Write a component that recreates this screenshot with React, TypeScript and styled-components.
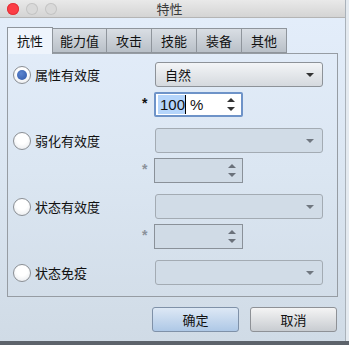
import React from "react";
import styled, { createGlobalStyle } from "styled-components";

const Global = createGlobalStyle`
  html, body { margin: 0; padding: 0; }
  body {
    width: 349px; height: 345px; overflow: hidden;
    background: #e6ebf0;
    font-family: "Noto Sans CJK SC", "Noto Sans", sans-serif;
    font-size: 13px; color: #1a1a1a;
  }
`;

const Desktop = styled.div`
  width: 349px; height: 345px;
  display: flex; flex-direction: column;
  background: linear-gradient(to right, transparent 345px, #aab2ba 345px, #aab2ba 346px, #e4eaf0 346px);
`;

const Window = styled.div`
  width: 345px; height: 341px;
  display: flex; flex-direction: column;
  background: linear-gradient(to bottom, #e4eefb 0%, #dbe6f2 50%, #d0dbe6 100%);
`;

const BottomStrip = styled.div`
  height: 4px;
  background: #5d636b;
`;

const TitleBar = styled.div`
  height: 17px;
  flex: none;
  display: flex; align-items: center;
  position: relative;
  background: linear-gradient(to bottom, #e9e9e9, #d4d4d4);
  border-bottom: 1px solid #b4b4b4;
`;

const Lights = styled.div`
  display: flex; gap: 7px; padding-left: 7px; align-items: center;
`;

const Light = styled.span<{ $color: string; $border: string }>`
  width: 12px; height: 12px; border-radius: 50%;
  background: ${p => p.$color};
  box-shadow: inset 0 0 0 1px ${p => p.$border};
  box-sizing: border-box;
`;

const Title = styled.div`
  position: absolute; left: 0; right: 0; top: 0; bottom: 0;
  display: flex; align-items: center; justify-content: center;
  font-size: 13px; color: #3a3a3a; padding-right: 6px;
`;

const Body = styled.div`
  flex: 1;
  display: flex; flex-direction: column;
  padding: 9px 7px 0 7px;
`;

const TabBar = styled.div`
  display: flex; align-items: flex-end;
  height: 26px;
  position: relative; z-index: 1;
`;

const Tab = styled.div<{ $active?: boolean; $w: number }>`
  width: ${p => p.$w}px;
  box-sizing: border-box;
  height: ${p => (p.$active ? 27 : 25)}px;
  margin-bottom: ${p => (p.$active ? -1 : 0)}px;
  display: flex; align-items: center; justify-content: center;
  border: 1px solid #8f959c;
  border-bottom: ${p => (p.$active ? "none" : "1px solid #8f959c")};
  margin-right: -1px;
  background: ${p => (p.$active ? "#eef4fc" : "linear-gradient(to bottom, #d9dee4, #b9c0c8)")};
  color: #111;
  font-size: 13px;
  padding-bottom: ${p => (p.$active ? 2 : 0)}px;
`;

const Panel = styled.div`
  width: 331px; height: 244px;
  box-sizing: border-box;
  border: 1px solid #969ca3;
  display: flex; flex-direction: column;
  gap: 11px;
  padding: 8px 0 0 5px;
`;

const Group = styled.div`
  display: flex; flex-direction: column; gap: 5px;
`;

const Row = styled.div`
  display: flex; align-items: center; height: 25px;
`;

const RadioLabel = styled.label`
  width: 142px;
  display: flex; align-items: center; gap: 4px;
  font-size: 13px; color: #111;
`;

const Radio = styled.span<{ $checked?: boolean }>`
  width: 18px; height: 18px; border-radius: 50%;
  box-sizing: border-box;
  border: 1px solid #8b8f94;
  background: radial-gradient(circle at 50% 35%, #ffffff 40%, #e3e6ea 100%);
  display: flex; align-items: center; justify-content: center;
  &::after {
    content: "";
    display: ${p => (p.$checked ? "block" : "none")};
    width: 10px; height: 10px; border-radius: 50%;
    background: radial-gradient(circle at 40% 35%, #5b84cf, #2f58a8);
  }
`;

const Select = styled.div<{ $disabled?: boolean }>`
  width: 168px; height: 25px;
  box-sizing: border-box;
  border: 1px solid ${p => (p.$disabled ? "#a3abb3" : "#8d9298")};
  border-radius: 3px;
  background: ${p => (p.$disabled ? "#d1dce7" : "linear-gradient(to bottom, #f3f5f7, #d5d9de)")};
  display: flex; align-items: center;
  padding: 0 8px 0 9px;
  font-size: 13px; color: #111;
`;

const SelectText = styled.span`
  flex: 1;
`;

const Arrow = styled.span<{ $disabled?: boolean }>`
  width: 0; height: 0;
  border-left: 4px solid transparent;
  border-right: 4px solid transparent;
  border-top: 4px solid ${p => (p.$disabled ? "#707780" : "#333")};
`;

const SubRow = styled.div`
  display: flex; align-items: center; height: 25px; padding-left: 129px;
`;

const Star = styled.span<{ $disabled?: boolean }>`
  width: 12px;
  font-family: "Liberation Sans", sans-serif;
  font-size: 14px;
  font-weight: bold;
  color: ${p => (p.$disabled ? "#8b929a" : "#111")};
  align-self: flex-start;
  padding-top: 3px;
`;

const Spinner = styled.div<{ $disabled?: boolean; $focused?: boolean }>`
  width: 89px; height: 25px;
  box-sizing: border-box;
  border: ${p => (p.$focused ? "2px solid #6e93c8" : "1px solid #8a9199")};
  border-radius: ${p => (p.$focused ? 2 : 0)}px;
  background: ${p => (p.$disabled ? "#d0dbe6" : "#ffffff")};
  display: flex; align-items: center;
  padding: 0 6px 0 2px;
`;

const SpinValue = styled.div`
  flex: 1; display: flex; align-items: center;
  font-family: "Liberation Sans", sans-serif; font-size: 15px; color: #111;
`;

const Selected = styled.span`
  background: #b5d5fb;
  padding: 1px 0 1px 2px;
  border-right: 1px solid #000;
  margin-right: 4px;
`;

const SpinArrows = styled.div<{ $disabled?: boolean }>`
  display: flex; flex-direction: column; gap: 5px; align-items: center;
  & > span {
    width: 0; height: 0;
    border-left: 4px solid transparent;
    border-right: 4px solid transparent;
  }
  & > span:first-child { border-bottom: 4px solid ${p => (p.$disabled ? "#6a717a" : "#333")}; }
  & > span:last-child { border-top: 4px solid ${p => (p.$disabled ? "#6a717a" : "#333")}; }
`;

const Footer = styled.div`
  display: flex; justify-content: flex-end; gap: 11px;
  padding: 10px 0 0 0;
  margin-right: 1px;
`;

const Button = styled.button<{ $primary?: boolean }>`
  width: 87px; height: 25px;
  box-sizing: border-box;
  border: 1px solid ${p => (p.$primary ? "#7f91a8" : "#8e9196")};
  border-radius: 3px;
  background: ${p =>
    p.$primary
      ? "linear-gradient(to bottom, #dde8f5, #aec8e6)"
      : "linear-gradient(to bottom, #f4f4f4, #c8ccd1)"};
  font-family: "Noto Sans CJK SC", sans-serif;
  font-size: 13px; color: #111;
  padding: 0;
`;

const tabs: [string, number][] = [
  ["抗性", 46],
  ["能力值", 55],
  ["攻击", 46],
  ["技能", 46],
  ["装备", 46],
  ["其他", 46],
];

type GroupProps = { label: string; checked?: boolean; value?: string; spinner?: boolean };

function Field({ label, checked, value, spinner }: GroupProps) {
  const enabled = !!checked;
  return (
    <Group>
      <Row>
        <RadioLabel>
          <Radio $checked={checked} />
          {label}
        </RadioLabel>
        <Select $disabled={!enabled}>
          <SelectText>{value}</SelectText>
          <Arrow $disabled={!enabled} />
        </Select>
      </Row>
      {spinner && (
        <SubRow>
          <Star $disabled={!enabled}>*</Star>
          <Spinner $disabled={!enabled} $focused={enabled}>
            <SpinValue>
              {enabled && (
                <>
                  <Selected>100</Selected>%
                </>
              )}
            </SpinValue>
            <SpinArrows $disabled={!enabled}>
              <span />
              <span />
            </SpinArrows>
          </Spinner>
        </SubRow>
      )}
    </Group>
  );
}

export default function App() {
  return (
    <>
      <Global />
      <Desktop>
        <Window>
          <TitleBar>
            <Lights>
              <Light $color="#fc3d45" $border="#e0343b" />
              <Light $color="#d9d9d9" $border="#c4c4c4" />
              <Light $color="#d9d9d9" $border="#c4c4c4" />
            </Lights>
            <Title>特性</Title>
          </TitleBar>
          <Body>
            <TabBar>
              {tabs.map(([t, w], i) => (
                <Tab key={t} $active={i === 0} $w={w}>
                  {t}
                </Tab>
              ))}
            </TabBar>
            <Panel>
              <Field label="属性有效度" checked value="自然" spinner />
              <Field label="弱化有效度" spinner />
              <Field label="状态有效度" spinner />
              <Field label="状态免疫" />
            </Panel>
            <Footer>
              <Button $primary>确定</Button>
              <Button>取消</Button>
            </Footer>
          </Body>
        </Window>
        <BottomStrip />
      </Desktop>
    </>
  );
}
